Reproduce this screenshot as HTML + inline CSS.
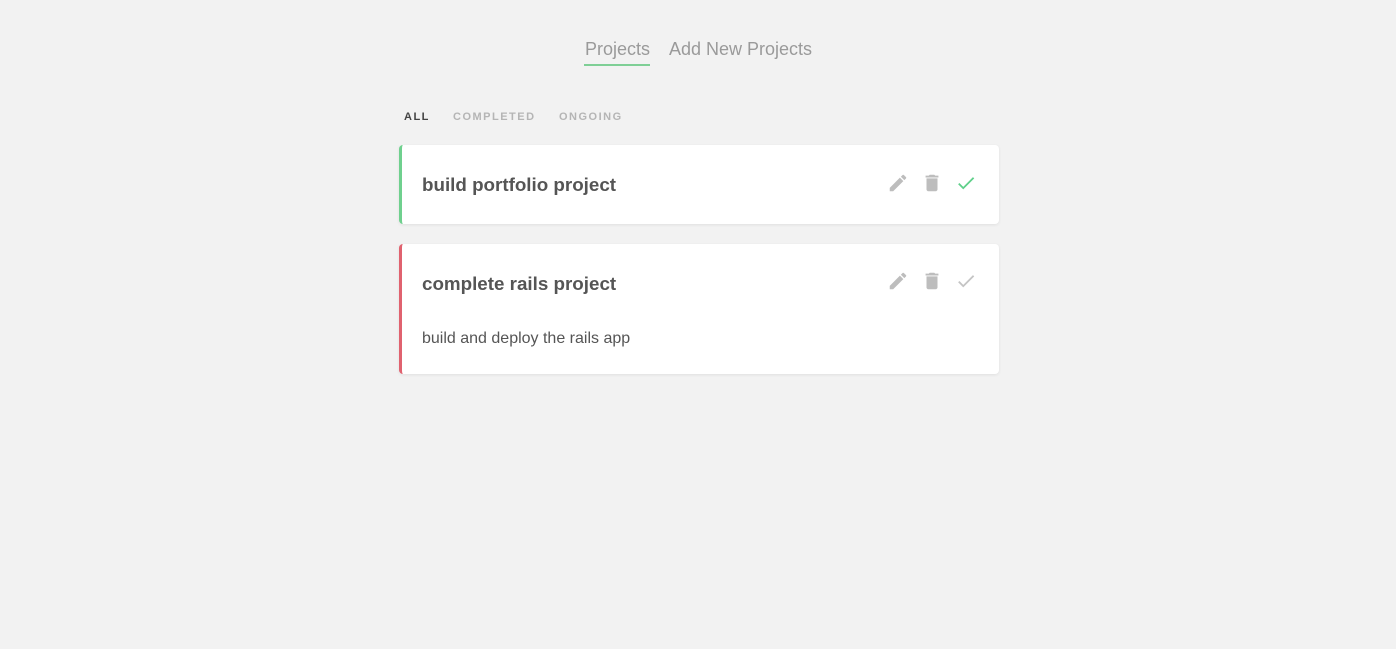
<!DOCTYPE html>
<html><head><meta charset="utf-8"><style>
*{margin:0;padding:0;box-sizing:border-box}
body{width:1396px;height:649px;background:#f2f2f2;font-family:"Liberation Sans",Arial,sans-serif;position:relative;overflow:hidden}
.nav{position:absolute;top:39px;font-size:18px;color:#9a9a9a}
.nav1{left:585px;}
.ul{position:absolute;left:584px;top:64px;width:66px;height:2px;background:#7fcf96}
.nav2{left:669px}
.tab{position:absolute;top:111px;font-size:11px;font-weight:bold;letter-spacing:1.5px;color:#b5b5b5}
.card{position:absolute;left:399px;width:600px;background:#fff;border-radius:4px;box-shadow:0 1px 3px rgba(0,0,0,.08)}
.card h2{position:absolute;left:20px;font-size:18.8px;font-weight:bold;color:#555}
.icons{position:absolute;left:485px;}
.icons svg{position:absolute;width:22px;height:22px}
.desc{position:absolute;left:20px;top:86px;font-size:16px;color:#555}
</style></head><body>
<div class="nav nav1">Projects</div><div class="ul"></div>
<div class="nav nav2">Add New Projects</div>
<div class="tab" style="left:404px;color:#444">ALL</div>
<div class="tab" style="left:453px">COMPLETED</div>
<div class="tab" style="left:559px">ONGOING</div>

<div class="card" style="top:145px;height:79px;border-left:3px solid #6fd08e">
<h2 style="top:29px">build portfolio project</h2>
<div class="icons" style="top:27px">
<svg viewBox="0 0 24 24" style="left:0"><path fill="#bdbdbd" d="M3 17.25V21h3.75L17.81 9.94l-3.75-3.75L3 17.25zM20.71 7.04a1 1 0 000-1.41l-2.34-2.34a1 1 0 00-1.41 0l-1.83 1.83 3.75 3.75 1.83-1.83z"/></svg>
<svg viewBox="0 0 24 24" style="left:34px"><path fill="#bdbdbd" d="M6 19c0 1.1.9 2 2 2h8c1.1 0 2-.9 2-2V7H6v12zM19 4h-3.5l-1-1h-5l-1 1H5v2h14V4z"/></svg>
<svg viewBox="0 0 24 24" style="left:68px"><path fill="#5fd08a" d="M9 16.17L4.83 12l-1.42 1.41L9 19 21 7l-1.41-1.41z"/></svg>
</div></div>

<div class="card" style="top:244px;height:130px;border-left:3px solid #e0626f">
<h2 style="top:29px">complete rails project</h2>
<div class="icons" style="top:26px">
<svg viewBox="0 0 24 24" style="left:0"><path fill="#bdbdbd" d="M3 17.25V21h3.75L17.81 9.94l-3.75-3.75L3 17.25zM20.71 7.04a1 1 0 000-1.41l-2.34-2.34a1 1 0 00-1.41 0l-1.83 1.83 3.75 3.75 1.83-1.83z"/></svg>
<svg viewBox="0 0 24 24" style="left:34px"><path fill="#bdbdbd" d="M6 19c0 1.1.9 2 2 2h8c1.1 0 2-.9 2-2V7H6v12zM19 4h-3.5l-1-1h-5l-1 1H5v2h14V4z"/></svg>
<svg viewBox="0 0 24 24" style="left:68px"><path fill="#c4c4c4" d="M9 16.17L4.83 12l-1.42 1.41L9 19 21 7l-1.41-1.41z"/></svg>
</div>
<div class="desc">build and deploy the rails app</div>
</div>
</body></html>
